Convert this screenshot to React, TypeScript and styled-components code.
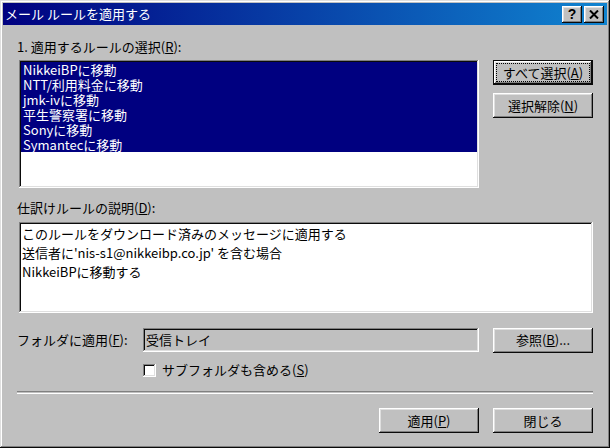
import React from "react";
import styled, { createGlobalStyle } from "styled-components";

const GlobalStyle = createGlobalStyle`
  html, body { margin: 0; padding: 0; background: #c0c0c0; }
  #root { width: 610px; height: 448px; }
`;

const sunken = `
  box-shadow: inset -1px -1px #ffffff, inset 1px 1px #808080,
    inset -2px -2px #dfdfdf, inset 2px 2px #0a0a0a;
`;

const Window = styled.div`
  width: 610px;
  height: 448px;
  box-sizing: border-box;
  background: #c0c0c0;
  padding: 3px;
  box-shadow: inset -1px -1px #0a0a0a, inset 1px 1px #dfdfdf,
    inset -2px -2px #808080, inset 2px 2px #ffffff;
  display: flex;
  flex-direction: column;
  font-family: "Noto Sans CJK JP", "Noto Sans", sans-serif;
  font-size: 13px;
  color: #000;
`;

const TitleBar = styled.div`
  height: 22px;
  flex: none;
  display: flex;
  align-items: center;
  padding: 0 3px 0 2px;
  background: linear-gradient(to right, #000080, #1084d0);
  color: #fff;
`;

const TitleText = styled.div`
  flex: 1;
  font-size: 13px;
  line-height: 22px;
  white-space: nowrap;
`;

const TitleButtons = styled.div`
  display: flex;
  gap: 2px;
`;

const TitleButton = styled.div`
  width: 20px;
  height: 17px;
  background: #c0c0c0;
  display: flex;
  align-items: center;
  justify-content: center;
  box-shadow: inset -1px -1px #0a0a0a, inset 1px 1px #ffffff,
    inset -2px -2px #808080, inset 2px 2px #dfdfdf;
  color: #000;
  font-family: "Liberation Sans", Arial, sans-serif;
  font-weight: bold;
  font-size: 14px;
  line-height: 17px;
`;

const Body = styled.div`
  flex: 1;
  display: flex;
  flex-direction: column;
  padding: 14px 14px 13px 14px;
`;

const Label = styled.div<{ $top?: number }>`
  line-height: 16px;
  height: 16px;
  white-space: nowrap;
  margin-top: ${(p) => p.$top ?? 0}px;
`;

const U = styled.span`
  text-decoration: underline;
  text-underline-offset: 1px;
`;

const ListRow = styled.div`
  display: flex;
  gap: 14px;
  margin-top: 5px;
  padding-left: 2px;
`;

const ListBox = styled.div`
  width: 460px;
  height: 128px;
  box-sizing: border-box;
  padding: 2px;
  background: #fff;
  ${sunken}
`;

const ListItem = styled.div<{ $selected?: boolean }>`
  height: 15px;
  line-height: 15px;
  padding-left: 2px;
  white-space: nowrap;
  background: ${(p) => (p.$selected ? "#000080" : "transparent")};
  color: ${(p) => (p.$selected ? "#fff" : "#000")};
`;

const ButtonColumn = styled.div`
  display: flex;
  flex-direction: column;
  gap: 8px;
`;

const Button = styled.button<{ $default?: boolean }>`
  width: 100px;
  height: 25px;
  border: none;
  padding: 0;
  margin: 0;
  background: #c0c0c0;
  font: inherit;
  color: #000;
  display: flex;
  align-items: center;
  justify-content: center;
  line-height: 16px;
  box-shadow: ${(p) =>
    p.$default
      ? "inset -2px -2px #0a0a0a, inset 1px 1px #0a0a0a, inset 2px 2px #ffffff, inset -3px -3px #808080, inset 3px 3px #dfdfdf"
      : "inset -1px -1px #0a0a0a, inset 1px 1px #ffffff, inset -2px -2px #808080, inset 2px 2px #dfdfdf"};
  outline: ${(p) => (p.$default ? "1px dotted #000" : "none")};
  outline-offset: -4px;
`;

const DescBox = styled.div`
  margin-top: 6px;
  margin-left: 2px;
  height: 91px;
  box-sizing: border-box;
  padding: 2px 2px 2px 3px;
  background: #fff;
  line-height: 19px;
  white-space: nowrap;
  ${sunken}
`;

const FolderRow = styled.div`
  display: flex;
  align-items: center;
  margin-top: 15px;
  height: 24px;
`;

const FolderLabel = styled.div`
  width: 126px;
  line-height: 16px;
  white-space: nowrap;
`;

const Field = styled.div`
  width: 336px;
  height: 24px;
  box-sizing: border-box;
  padding: 2px 3px;
  line-height: 20px;
  background: #c0c0c0;
  margin-right: 14px;
  ${sunken}
`;

const CheckRow = styled.label`
  display: flex;
  align-items: center;
  gap: 6px;
  height: 16px;
  margin-top: 10px;
  padding-left: 126px;
  line-height: 16px;
`;

const CheckBox = styled.span`
  width: 13px;
  height: 13px;
  flex: none;
  background: #fff;
  ${sunken}
`;

const Separator = styled.div`
  margin-top: 13px;
  height: 1px;
  border-top: 1px solid #808080;
  border-bottom: 1px solid #ffffff;
`;

const ButtonRow = styled.div`
  display: flex;
  justify-content: flex-end;
  gap: 14px;
  margin-top: 14px;
`;

const rules = [
  "NikkeiBPに移動",
  "NTT/利用料金に移動",
  "jmk-ivに移動",
  "平生警察署に移動",
  "Sonyに移動",
  "Symantecに移動",
];

export default function App() {
  return (
    <>
      <GlobalStyle />
      <Window>
        <TitleBar>
          <TitleText>メール ルールを適用する</TitleText>
          <TitleButtons>
            <TitleButton>?</TitleButton>
            <TitleButton>
              <svg width="10" height="9" viewBox="0 0 10 9">
                <path d="M1 0.5 L9 8.5 M9 0.5 L1 8.5" stroke="#000" strokeWidth="2" />
              </svg>
            </TitleButton>
          </TitleButtons>
        </TitleBar>
        <Body>
          <Label>
            1. 適用するルールの選択(<U>R</U>):
          </Label>
          <ListRow>
            <ListBox>
              {rules.map((r) => (
                <ListItem key={r} $selected>
                  {r}
                </ListItem>
              ))}
            </ListBox>
            <ButtonColumn>
              <Button $default>
                すべて選択(<U>A</U>)
              </Button>
              <Button>
                選択解除(<U>N</U>)
              </Button>
            </ButtonColumn>
          </ListRow>
          <Label $top={12}>
            仕訳けルールの説明(<U>D</U>):
          </Label>
          <DescBox>
            <div>このルールをダウンロード済みのメッセージに適用する</div>
            <div>送信者に'nis-s1@nikkeibp.co.jp' を含む場合</div>
            <div>NikkeiBPに移動する</div>
          </DescBox>
          <FolderRow>
            <FolderLabel>
              フォルダに適用(<U>F</U>):
            </FolderLabel>
            <Field>受信トレイ</Field>
            <Button>
              参照(<U>B</U>)...
            </Button>
          </FolderRow>
          <CheckRow>
            <CheckBox />
            <span>
              サブフォルダも含める(<U>S</U>)
            </span>
          </CheckRow>
          <Separator />
          <ButtonRow>
            <Button>
              適用(<U>P</U>)
            </Button>
            <Button>閉じる</Button>
          </ButtonRow>
        </Body>
      </Window>
    </>
  );
}
